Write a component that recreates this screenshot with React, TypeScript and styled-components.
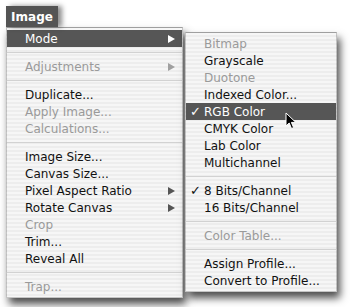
import React from "react";
import styled, { createGlobalStyle } from "styled-components";

const Global = createGlobalStyle`
  html, body { margin: 0; padding: 0; background: #ffffff; }
  body { width: 350px; height: 307px; overflow: hidden; font-family: "DejaVu Sans", "Liberation Sans", sans-serif; }
`;

const Page = styled.div`
  position: relative;
  padding: 6px 0 0 6px;
`;

const Tab = styled.div`
  width: 52px;
  height: 21px;
  background: #545454;
  color: #ffffff;
  font-size: 12px;
  font-weight: bold;
  display: flex;
  align-items: center;
  justify-content: center;
  box-shadow: 4px 0 5px rgba(0, 0, 0, 0.45);
  position: relative;
  z-index: 2;
`;

const MenuRow = styled.div`
  display: flex;
  align-items: flex-start;
`;

const Menu = styled.div<{ $width: number; $top: number; $left: number }>`
  width: ${(p) => p.$width}px;
  margin-top: ${(p) => p.$top}px;
  margin-left: ${(p) => p.$left}px;
  box-sizing: border-box;
  padding: 2px 0 2px;
  background: repeating-linear-gradient(
    to bottom,
    #f6f6f6 0px,
    #f6f6f6 2px,
    #ededed 2px,
    #ededed 4px
  );
  border: 1px solid rgba(0, 0, 0, 0.2);
  border-top-color: rgba(0, 0, 0, 0.35);
  box-shadow: 3px 6px 8px rgba(0, 0, 0, 0.7);
  font-size: 12px;
`;

const Item = styled.div<{ $disabled?: boolean; $active?: boolean }>`
  height: 17px;
  display: flex;
  align-items: center;
  padding: 0 7px 0 3px;
  color: ${(p) => (p.$active ? "#ffffff" : p.$disabled ? "#9a9a9a" : "#111111")};
  background: ${(p) => (p.$active ? "#565656" : "transparent")};
  white-space: nowrap;
`;

const Check = styled.span`
  width: 15px;
  flex: none;
  font-size: 13px;
  font-weight: bold;
  padding-left: 1px;
  box-sizing: border-box;
`;

const Label = styled.span`
  flex: 1;
`;

const Arrow = styled.span<{ $color: string }>`
  width: 0;
  height: 0;
  border-top: 4.5px solid transparent;
  border-bottom: 4.5px solid transparent;
  border-left: 7px solid ${(p) => p.$color};
`;

const Sep = styled.div`
  height: 11px;
  display: flex;
  align-items: center;
  &::after {
    content: "";
    flex: 1;
    height: 1px;
    background: #d2d2d2;
  }
`;

const Cursor = styled.svg`
  position: absolute;
  left: 285px;
  top: 112px;
`;

type Entry =
  | { sep: true }
  | { label: string; disabled?: boolean; active?: boolean; sub?: boolean; check?: boolean };

const mainItems: Entry[] = [
  { label: "Mode", active: true, sub: true },
  { sep: true },
  { label: "Adjustments", disabled: true, sub: true },
  { sep: true },
  { label: "Duplicate..." },
  { label: "Apply Image...", disabled: true },
  { label: "Calculations...", disabled: true },
  { sep: true },
  { label: "Image Size..." },
  { label: "Canvas Size..." },
  { label: "Pixel Aspect Ratio", sub: true },
  { label: "Rotate Canvas", sub: true },
  { label: "Crop", disabled: true },
  { label: "Trim..." },
  { label: "Reveal All" },
  { sep: true },
  { label: "Trap...", disabled: true },
];

const subItems: Entry[] = [
  { label: "Bitmap", disabled: true },
  { label: "Grayscale" },
  { label: "Duotone", disabled: true },
  { label: "Indexed Color..." },
  { label: "RGB Color", active: true, check: true },
  { label: "CMYK Color" },
  { label: "Lab Color" },
  { label: "Multichannel" },
  { sep: true },
  { label: "8 Bits/Channel", check: true },
  { label: "16 Bits/Channel" },
  { sep: true },
  { label: "Color Table...", disabled: true },
  { sep: true },
  { label: "Assign Profile..." },
  { label: "Convert to Profile..." },
];

function renderItems(items: Entry[]) {
  return items.map((it, i) => {
    if ("sep" in it) return <Sep key={i} />;
    const arrowColor = it.active ? "#ffffff" : it.disabled ? "#a0a0a0" : "#555555";
    return (
      <Item key={i} $disabled={it.disabled} $active={it.active}>
        <Check>{it.check ? "✓" : ""}</Check>
        <Label>{it.label}</Label>
        {it.sub && <Arrow $color={arrowColor} />}
      </Item>
    );
  });
}

export default function App() {
  return (
    <>
      <Global />
      <Page>
        <Tab>Image</Tab>
        <MenuRow>
          <Menu $width={177} $top={0} $left={0}>
            {renderItems(mainItems)}
          </Menu>
          <Menu $width={152} $top={5} $left={2}>
            {renderItems(subItems)}
          </Menu>
        </MenuRow>
        <Cursor width="12" height="18" viewBox="0 0 12 18">
          <path d="M1 1 L1 14 L4.2 11 L6.5 16.5 L8.6 15.6 L6.4 10.4 L10.8 10.4 Z" fill="#000" stroke="#fff" strokeWidth="1" />
        </Cursor>
      </Page>
    </>
  );
}
